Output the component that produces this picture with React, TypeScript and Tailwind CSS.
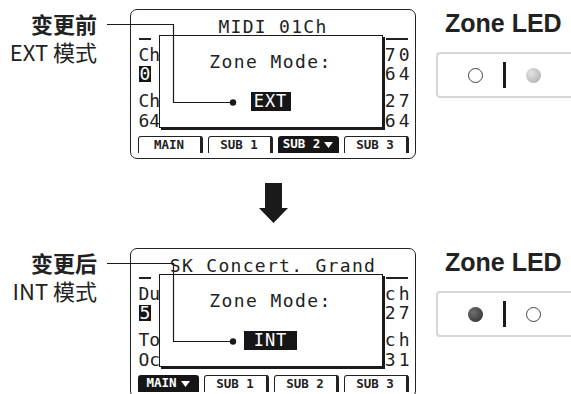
import React from 'react';

const mono = "font-['DejaVu_Sans_Mono',monospace]";

interface LcdProps {
  title: string;
  left: string[];
  right: string[];
  mode: string;
  modeWidth: string;
  tab: number;
}

function Tab({ label, selected }: { label: string; selected: boolean }) {
  return selected ? (
    <div className="flex h-[17px] flex-1 items-center justify-center gap-[4px] rounded-t-[3px] bg-[#161616] pt-[1px] text-[12.5px] font-bold leading-none text-white">
      <span>{label}</span>
      <svg width="9" height="6" viewBox="0 0 9 6">
        <path d="M0 0 H9 L4.5 6 Z" fill="#fff" />
      </svg>
    </div>
  ) : (
    <div className="flex h-[17px] flex-1 items-center justify-center rounded-t-[3px] border-l-[1.5px] border-r-[3px] border-t-[1.5px] border-[#222] pt-[1px] text-[12.5px] font-bold leading-none text-[#222]">
      {label}
    </div>
  );
}

function Lcd({ title, left, right, mode, modeWidth, tab }: LcdProps) {
  const tabs = ['MAIN', 'SUB 1', 'SUB 2', 'SUB 3'];
  return (
    <div className={`relative flex h-[150px] w-[286px] shrink-0 flex-col rounded-[7px] border-[1.5px] border-[#222] bg-white text-[#222] ${mono}`}>
      <div className="h-[27px] whitespace-nowrap pt-[8px] text-center text-[18px] leading-[18px] tracking-[1.3px]">
        {title}
      </div>
      <div className="mt-[1px] flex h-[1.5px] justify-between px-[7.5px]">
        <div className="w-[12px] bg-[#222]" />
        <div className="w-[22px] bg-[#222]" />
      </div>
      {/* screen underneath the popup */}
      <div className="flex justify-between pl-[7.5px] pr-[2.5px] text-[18px] leading-[16px]">
        <div className="flex flex-col items-start">
          <div className="mt-[7.5px]">{left[0]}</div>
          <div className="mt-[3px] bg-[#161616] px-[1px] text-white">{left[1]}</div>
          <div className="mt-[11px]">{left[2]}</div>
          <div className="mt-[4px]">{left[3]}</div>
        </div>
        <div className="flex flex-col items-end tracking-[3px]">
          <div className="mt-[7.5px]">{right[0]}</div>
          <div className="mt-[3px]">{right[1]}</div>
          <div className="mt-[11px]">{right[2]}</div>
          <div className="mt-[4px]">{right[3]}</div>
        </div>
      </div>
      <div className="mb-[5.5px] mt-auto flex gap-[5px] px-[6.5px]">
        {tabs.map((t, i) => (
          <Tab key={t} label={t} selected={i === tab} />
        ))}
      </div>

      <div className="absolute left-[27.5px] top-[24.5px] flex h-[93px] w-[224px] flex-col items-center border-[1.5px] border-[#1a1a1a] bg-white shadow-[2px_2px_0_#1a1a1a]">
        <div className="pt-[16px] text-[18px] leading-[20px] tracking-[1.4px]">Zone Mode:</div>
        <div className={`mt-[20.5px] flex h-[19px] items-center justify-center bg-[#161616] text-[17px] leading-none tracking-[1px] text-white ${modeWidth}`}>
          {mode}
        </div>
      </div>
    </div>
  );
}

function Callout() {
  return (
    <svg className="pointer-events-none absolute left-0 top-0" width="240" height="100">
      <path d="M107 15.5 H173.5 V93.5 H233" fill="none" stroke="#1a1a1a" strokeWidth="1.2" />
      <circle cx="233" cy="93.5" r="3.2" fill="#1a1a1a" />
    </svg>
  );
}

function Led({ on }: { on: 'left' | 'right' }) {
  const empty = <div className="h-[15px] w-[15px] rounded-full border border-[#444] bg-white" />;
  const dim = <div className="h-[15px] w-[15px] rounded-full bg-[radial-gradient(circle_at_35%_35%,#e4e4e4,#a8a8a8)]" />;
  const lit = <div className="h-[15px] w-[15px] rounded-full bg-[radial-gradient(circle_at_35%_35%,#707070,#2a2a2a)]" />;
  return (
    <div className="ml-[20px] flex shrink-0 flex-col">
      <div className="-mt-[1px] whitespace-nowrap pl-[9px] font-['Liberation_Sans',Arial,sans-serif] text-[25px] font-bold leading-[30px] text-[#222]">
        Zone LED
      </div>
      <div className="mt-[14px] flex h-[46px] w-[160px] items-center gap-[20px] rounded-[4px] border-2 border-[#d6d6d6] pl-[30px]">
        {on === 'left' ? lit : empty}
        <div className="h-[26px] w-[3px] bg-[#1a1a1a]" />
        {on === 'left' ? empty : dim}
      </div>
    </div>
  );
}

function Row({ head, sub, lcd, led }: { head: string; sub: string; lcd: LcdProps; led: 'left' | 'right' }) {
  return (
    <div className="relative flex h-[150px] shrink-0">
      <div className="w-[130px] shrink-0 whitespace-nowrap pr-[33px] text-right font-['Noto_Sans_CJK_SC',sans-serif] text-[22px] leading-[28px] text-[#222]">
        <div className="font-bold">{head}</div>
        <div>{sub}</div>
      </div>
      <Lcd {...lcd} />
      <Led on={led} />
      <Callout />
    </div>
  );
}

export default function App() {
  return (
    <div className="flex h-[394px] w-[571px] flex-col overflow-hidden bg-white pt-[9px]">
      <Row
        head="变更前"
        sub="EXT 模式"
        led="right"
        lcd={{
          title: 'MIDI 01Ch',
          left: ['Ch', '0', 'Ch', '64'],
          right: ['70', '64', '27', '64'],
          mode: 'EXT',
          modeWidth: 'w-[40px]',
          tab: 2,
        }}
      />
      <div className="ml-[130px] mt-[24px] mb-[25px] flex h-[40px] w-[286px] shrink-0 justify-center">
        <svg width="29" height="40" viewBox="0 0 29 40">
          <path d="M6 0 H23 V25 H29 L14.5 40 L0 25 H6 Z" fill="#1a1a1a" />
        </svg>
      </div>
      <Row
        head="变更后"
        sub="INT 模式"
        led="left"
        lcd={{
          title: 'SK Concert. Grand',
          left: ['Du', '5', 'To', 'Oc'],
          right: ['ch', '27', 'ch', '31'],
          mode: 'INT',
          modeWidth: 'w-[53px]',
          tab: 0,
        }}
      />
    </div>
  );
}
